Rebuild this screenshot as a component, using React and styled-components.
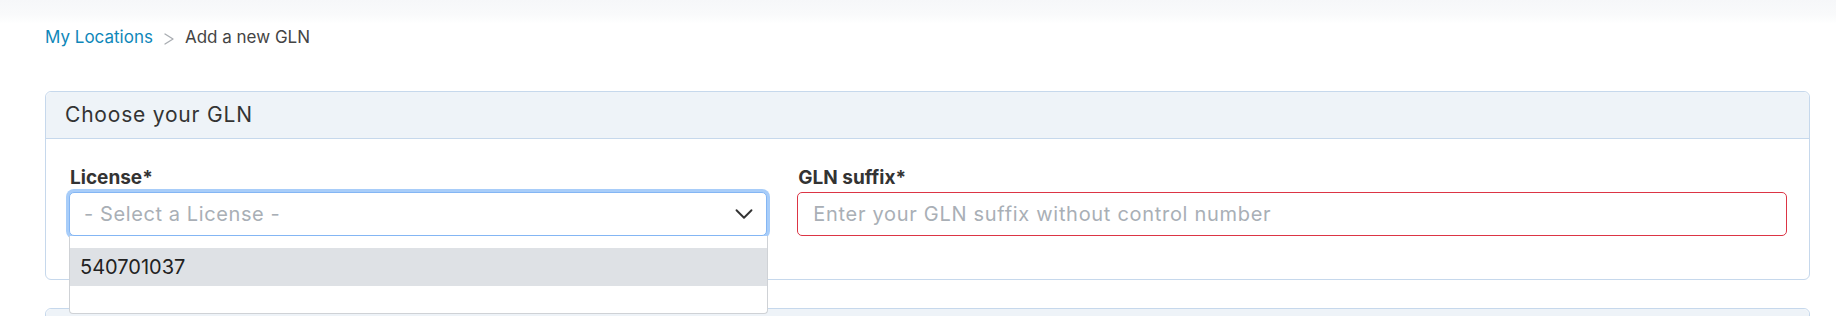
import React from 'react';
import styled, { createGlobalStyle } from 'styled-components';
import { ChevronDown } from 'lucide-react';

const GlobalStyle = createGlobalStyle`
  html, body {
    margin: 0;
    padding: 0;
    background: #ffffff;
    font-family: Inter, "Open Sans", "Liberation Sans", sans-serif;
    color: #333333;
  }
  * {
    box-sizing: border-box;
  }
`

const App = () => {
  return (
    <>
      <GlobalStyle />
      <TopShade />
      <Page>
        <Breadcrumb>
          <a href="#locations">My Locations</a>
          <Separator width="10" height="12" viewBox="0 0 10 12">
            <polyline points="1,1 9,6 1,11" />
          </Separator>
          <span>Add a new GLN</span>
        </Breadcrumb>

        <Card>
          <CardHeader>Choose your GLN</CardHeader>
          <CardBody>
            <FormRow>
              <Field>
                <Label>License*</Label>
                <SelectWrap>
                  <Select>
                    <Placeholder>- Select a License -</Placeholder>
                    <ChevronDown size={30} strokeWidth={1.5} color="#333" />
                  </Select>
                  <Menu>
                    <Option active>540701037</Option>
                  </Menu>
                </SelectWrap>
              </Field>
              <Field>
                <Label>GLN suffix*</Label>
                <Input placeholder="Enter your GLN suffix without control number" invalid />
              </Field>
            </FormRow>
          </CardBody>
        </Card>

        <Card>
          <CardHeader />
        </Card>
      </Page>
    </>
  )
}

const TopShade = styled.div`
  position: absolute;
  top: 0;
  left: 0;
  right: 0;
  height: 24px;
  background: linear-gradient(#f6f7f9, #f9fafb 60%, rgba(255, 255, 255, 0));
  pointer-events: none;
`

const Page = styled.div`
  position: relative;
  padding: 24px 26px 0 45px;
`

const Breadcrumb = styled.nav`
  display: flex;
  align-items: center;
  height: 26px;
  font-size: 17px;
  color: #444;
  a {
    color: #0e87b9;
    text-decoration: none;
  }
`

const Separator = styled.svg`
  margin: 3px 11px 0 11px;
  fill: none;
  stroke: #a9adb2;
  stroke-width: 1.4;
  stroke-linejoin: round;
  stroke-linecap: round;
`

const Card = styled.section`
  margin-top: 41px;
  border: 1px solid #c6d8ec;
  border-radius: 6px;
  background: #fff;
  & + & {
    margin-top: 28px;
  }
`

const CardHeader = styled.header`
  height: 47px;
  line-height: 46px;
  padding: 0 19px;
  background: #eef3f8;
  border-bottom: 1px solid #c6d8ec;
  border-radius: 6px 6px 0 0;
  font-size: 21px;
  letter-spacing: 0.8px;
  color: #333;
`

const CardBody = styled.div`
  padding: 27px 22px 43px 23px;
`

const FormRow = styled.div`
  display: grid;
  grid-template-columns: calc((100% + 30px) * 5 / 12 - 30px) 1fr;
  column-gap: 30px;
`

const Field = styled.div`
  display: flex;
  flex-direction: column;
`

const Label = styled.label`
  font-size: 19px;
  line-height: 24px;
  font-weight: 700;
  color: #333;
  margin-bottom: 2px;
  padding-left: 1px;
`

const SelectWrap = styled.div`
  position: relative;
`

const Select = styled.div`
  display: flex;
  align-items: center;
  justify-content: space-between;
  height: 44px;
  padding: 0 7px 0 14px;
  border: 1px solid #84b6f4;
  border-radius: 5px;
  box-shadow: 0 0 0 3px #a8cdf9;
  background: #fff;
`

const Placeholder = styled.span`
  font-size: 20px;
  letter-spacing: 0.6px;
  color: #a9afb6;
`

const Menu = styled.ul`
  position: absolute;
  top: 44px;
  left: 0;
  right: -1px;
  margin: 0;
  padding: 12px 0 27px;
  list-style: none;
  background: #fff;
  border: 1px solid #cfd2d6;
  border-top: none;
  border-radius: 0 0 4px 4px;
  z-index: 2;
`

const Option = styled.li`
  height: 38px;
  line-height: 38px;
  padding: 0 10px;
  font-size: 20px;
  color: #222;
  background: ${(p) => (p.active ? '#dee1e5' : 'transparent')};
`

const Input = styled.input`
  height: 44px;
  padding: 0 15px;
  border: 1px solid ${(p) => (p.invalid ? '#dc3545' : '#ced4da')};
  border-radius: 5px;
  font-family: inherit;
  font-size: 20px;
  color: #333;
  outline: none;
  &::placeholder {
    color: #a9afb6;
    letter-spacing: 0.7px;
  }
`

export default App
